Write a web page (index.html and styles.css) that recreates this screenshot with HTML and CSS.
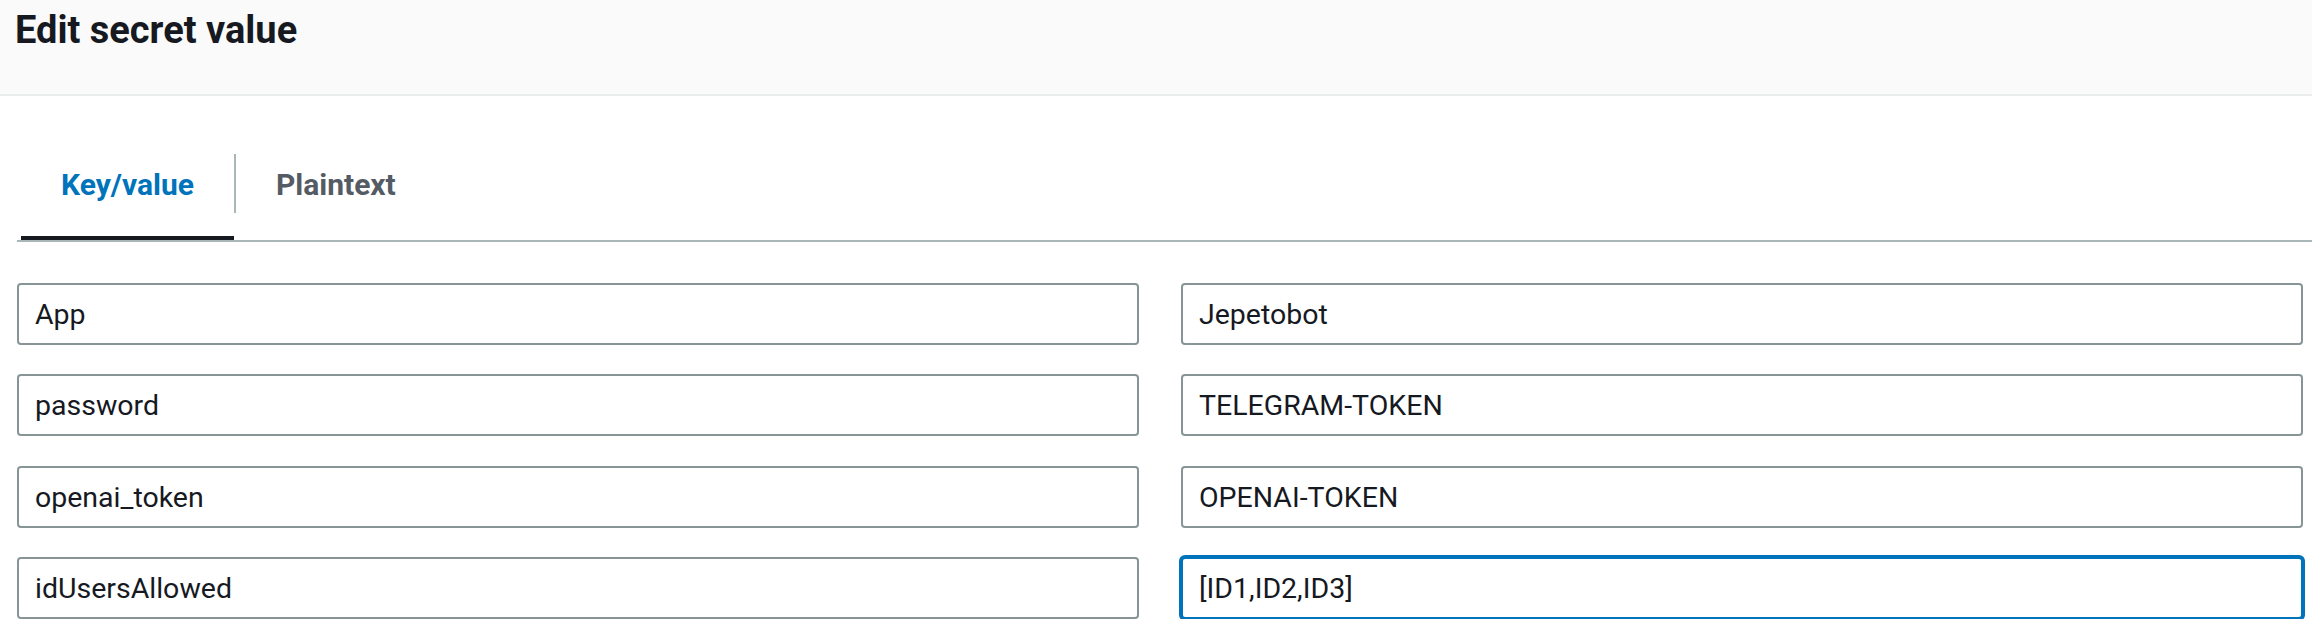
FILE: index.html
```html
<!DOCTYPE html>
<html lang="en">
<head>
<meta charset="utf-8">
<title>Edit secret value</title>
<link rel="stylesheet" href="styles.css">
</head>
<body>
<header class="page-header">
  <h1 class="title">Edit secret value</h1>
</header>
<nav class="tabs">
  <div class="tab active">Key/value</div>
  <div class="tab-sep"></div>
  <div class="tab">Plaintext</div>
</nav>
<section class="kv-grid">
  <div class="field">App</div>
  <div class="field">Jepetobot</div>
  <div class="field">password</div>
  <div class="field">TELEGRAM-TOKEN</div>
  <div class="field">openai_token</div>
  <div class="field">OPENAI-TOKEN</div>
  <div class="field">idUsersAllowed</div>
  <div class="field focused">[ID1,ID2,ID3]</div>
</section>
</body>
</html>
```
FILE: styles.css
```css
* { box-sizing: border-box; }
html, body {
  margin: 0;
  padding: 0;
  background: #ffffff;
  font-family: Roboto, "Noto Sans", Arial, sans-serif;
  color: #16191f;
}
.page-header {
  height: 96px;
  background: #fafafa;
  border-bottom: 2px solid #eaeded;
  padding: 7px 0 0 15px;
}
.title {
  margin: 0;
  font-size: 38px;
  line-height: 46px;
  font-weight: 700;
  color: #16191f;
}
.tabs {
  display: flex;
  align-items: flex-start;
  margin: 38px 0 0 17px;
  padding-left: 4px;
  border-bottom: 2px solid #aab7b8;
}
.tab {
  padding: 33px 40px 33px;
  border-bottom: 4px solid transparent;
  font-size: 30px;
  line-height: 36px;
  font-weight: 700;
  color: #545b64;
  white-space: nowrap;
}
.tab.active {
  color: #0073bb;
  border-bottom-color: #16191f;
}
.tab-sep {
  width: 2px;
  height: 59px;
  margin-top: 20px;
  background: #aab7b8;
}
.kv-grid {
  display: grid;
  grid-template-columns: 1fr 1fr;
  column-gap: 42px;
  row-gap: 29.4px;
  margin: 41px 9px 0 17px;
}
.field {
  height: 62px;
  border: 2px solid #879596;
  border-radius: 4px;
  padding: 1px 16px 0;
  display: flex;
  align-items: center;
  font-size: 28.5px;
  color: #16191f;
  white-space: nowrap;
  background: #ffffff;
}
.field.focused {
  border-color: #0073bb;
  box-shadow: 0 0 0 2px #0073bb;
}
```
